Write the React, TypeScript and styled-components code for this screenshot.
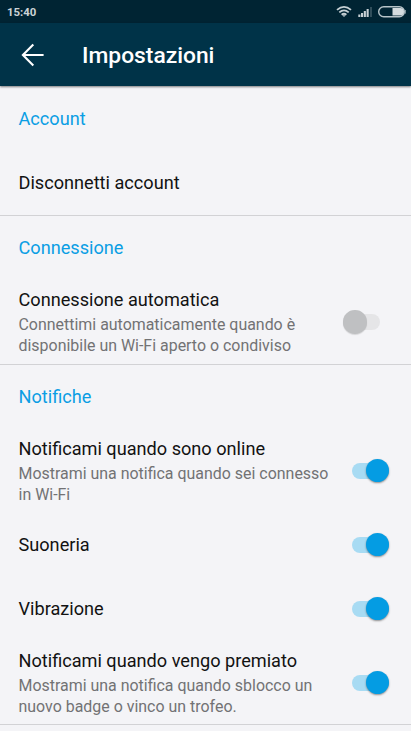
import React from 'react';
import styled, { createGlobalStyle } from 'styled-components';

const GlobalStyle = createGlobalStyle`
  * { box-sizing: border-box; }
  body { margin: 0; background: #f4f4f7; font-family: Roboto, sans-serif; overflow: hidden; }
`;

const Screen = styled.main`
  width: 411px;
  height: 731px;
  overflow: hidden;
  display: flex;
  flex-direction: column;
  background: #f4f4f7;
`;

const StatusBar = styled.div`
  flex: none;
  height: 23px;
  padding: 0 5px 0 7px;
  display: flex;
  align-items: center;
  justify-content: space-between;
  background: #002433;
  color: #ccd3d6;
  font-size: 11.4px;
  font-weight: 700;
`;

const Toolbar = styled.header`
  flex: none;
  height: 63px;
  padding-left: 21px;
  display: flex;
  align-items: center;
  gap: 37px;
  background: #003348;
  color: #fff;
  box-shadow: 0 1px 2px rgba(0, 0, 0, 0.5);
  z-index: 1;
`;

const ToolbarTitle = styled.h1`
  margin: 0;
  padding-top: 3px;
  font-size: 22.8px;
  font-weight: 500;
  line-height: 28px;
`;

const BackButton = styled.button`
  display: flex;
  padding: 0;
  border: 0;
  background: none;
  color: inherit;
`;

const Section = styled.section<{ $gap?: number }>`
  flex: none;
  padding-bottom: ${(p) => p.$gap ?? 0}px;
  border-bottom: 1px solid #d2d2d5;
`;

const SectionTitle = styled.h2<{ $offset?: number }>`
  margin: 0;
  padding: ${(p) => p.$offset ?? 0}px 0 0 18.5px;
  font-size: 18.15px;
  font-weight: 400;
  line-height: 63px;
  color: #0b9ee4;
`;

const Row = styled.div<{ $tall: boolean }>`
  height: ${(p) => (p.$tall ? 84 : 64)}px;
  padding: 0 22px 0 18.5px;
  display: flex;
  align-items: center;
  justify-content: space-between;
`;

const RowText = styled.div`
  padding-top: 2px;
`;

const RowTitle = styled.div`
  font-size: 18.15px;
  line-height: 24px;
  color: #121212;
  white-space: nowrap;
`;

const Summary = styled.div`
  padding-top: 3px;
  font-size: 15.95px;
  line-height: 20.5px;
  color: #727274;
  white-space: pre;
`;

const Track = styled.button<{ $on: boolean }>`
  flex: none;
  width: 37px;
  height: 16px;
  padding: 0;
  border: 0;
  border-radius: 8px;
  display: flex;
  align-items: center;
  justify-content: ${(p) => (p.$on ? 'flex-end' : 'flex-start')};
  margin: ${(p) => (p.$on ? '1px 0 0' : '2px 9px 0 0')};
  background: ${(p) => (p.$on ? '#a8dbf3' : '#e5e5e7')};
`;

const Thumb = styled.span<{ $on: boolean }>`
  flex: none;
  width: 23.5px;
  height: 23.5px;
  border-radius: 50%;
  background: ${(p) => (p.$on ? '#049ce3' : '#bfc0c2')};
  box-shadow: ${(p) => (p.$on ? '0 1px 2px rgba(0,0,0,.42)' : '0 1px 1px rgba(0,0,0,.12)')};
`;

const WifiIcon = () => (
  <svg width="16" height="13" viewBox="0 0 16 13" fill="none" stroke="#c6d0d4" strokeWidth="1.8">
    <path d="M1 4.9Q8 -1.2 15 4.9M3.3 7.4Q8 3.4 12.7 7.4M5.6 9.7Q8 7.8 10.4 9.7" />
    <path d="M6.4 10.3h3.2L8 12z" fill="#c6d0d4" stroke="none" />
  </svg>
);

const SignalIcon = () => (
  <svg width="15" height="10" viewBox="0 0 15 10">
    <path d="M.3 7.6h2.1V10H.3zM3 6h2.1v4H3zM5.8 4h2.1v6H5.8zM8.6 2h2.1v8H8.6z" fill="#c6d0d4" />
    <path d="M12 0h2v10h-2z" fill="#304e5b" />
  </svg>
);

const BatteryIcon = () => (
  <svg width="28" height="12" viewBox="0 0 28 12">
    <rect x=".7" y=".8" width="25.6" height="10" rx="5" fill="none" stroke="#b7c4c9" strokeWidth="1.4" />
    <path d="M14.5 2h7.7a3.8 3.8 0 0 1 0 7.6h-7.7z" fill="#d5dcdf" />
    <path d="M27.2 4v3.6" stroke="#b7c4c9" />
  </svg>
);

const Indicators = styled.div`
  display: flex;
  align-items: center;
  height: 23px;
`;

const SignalSlot = styled.span`
  display: flex;
  padding: 0 5px 0 6px;
`;

const BackIcon = () => (
  <svg width="24" height="24" viewBox="0 0 24 24" fill="none" stroke="currentColor" strokeWidth="2.1">
    <path d="M22.6 12H2M12.3 1.6L1.9 12l10.4 10.4" />
  </svg>
);

interface SettingProps {
  title: string;
  summary?: string;
  on?: boolean;
}

const Setting = ({ title, summary, on }: SettingProps) => (
  <Row $tall={!!summary}>
    <RowText>
      <RowTitle>{title}</RowTitle>
      {summary && <Summary>{summary}</Summary>}
    </RowText>
    {on !== undefined && (
      <Track $on={on} role="switch" aria-checked={on} aria-label={title}>
        <Thumb $on={on} />
      </Track>
    )}
  </Row>
);

export default function App() {
  return (
    <>
      <GlobalStyle />
      <Screen>
        <StatusBar>
          <span>15:40</span>
          <Indicators>
            <WifiIcon />
            <SignalSlot><SignalIcon /></SignalSlot>
            <BatteryIcon />
          </Indicators>
        </StatusBar>
        <Toolbar>
          <BackButton aria-label="Indietro"><BackIcon /></BackButton>
          <ToolbarTitle>Impostazioni</ToolbarTitle>
        </Toolbar>
        <Section $gap={1}>
          <SectionTitle $offset={1}>Account</SectionTitle>
          <Setting title="Disconnetti account" />
        </Section>
        <Section $gap={1}>
          <SectionTitle>Connessione</SectionTitle>
          <Setting
            title="Connessione automatica"
            summary={'Connettimi automaticamente quando è\ndisponibile un Wi-Fi aperto o condiviso'}
            on={false}
          />
        </Section>
        <Section>
          <SectionTitle>Notifiche</SectionTitle>
          <Setting
            title="Notificami quando sono online"
            summary={'Mostrami una notifica quando sei connesso\nin Wi-Fi'}
            on
          />
          <Setting title="Suoneria" on />
          <Setting title="Vibrazione" on />
          <Setting
            title="Notificami quando vengo premiato"
            summary={'Mostrami una notifica quando sblocco un\nnuovo badge o vinco un trofeo.'}
            on
          />
        </Section>
      </Screen>
    </>
  );
}
